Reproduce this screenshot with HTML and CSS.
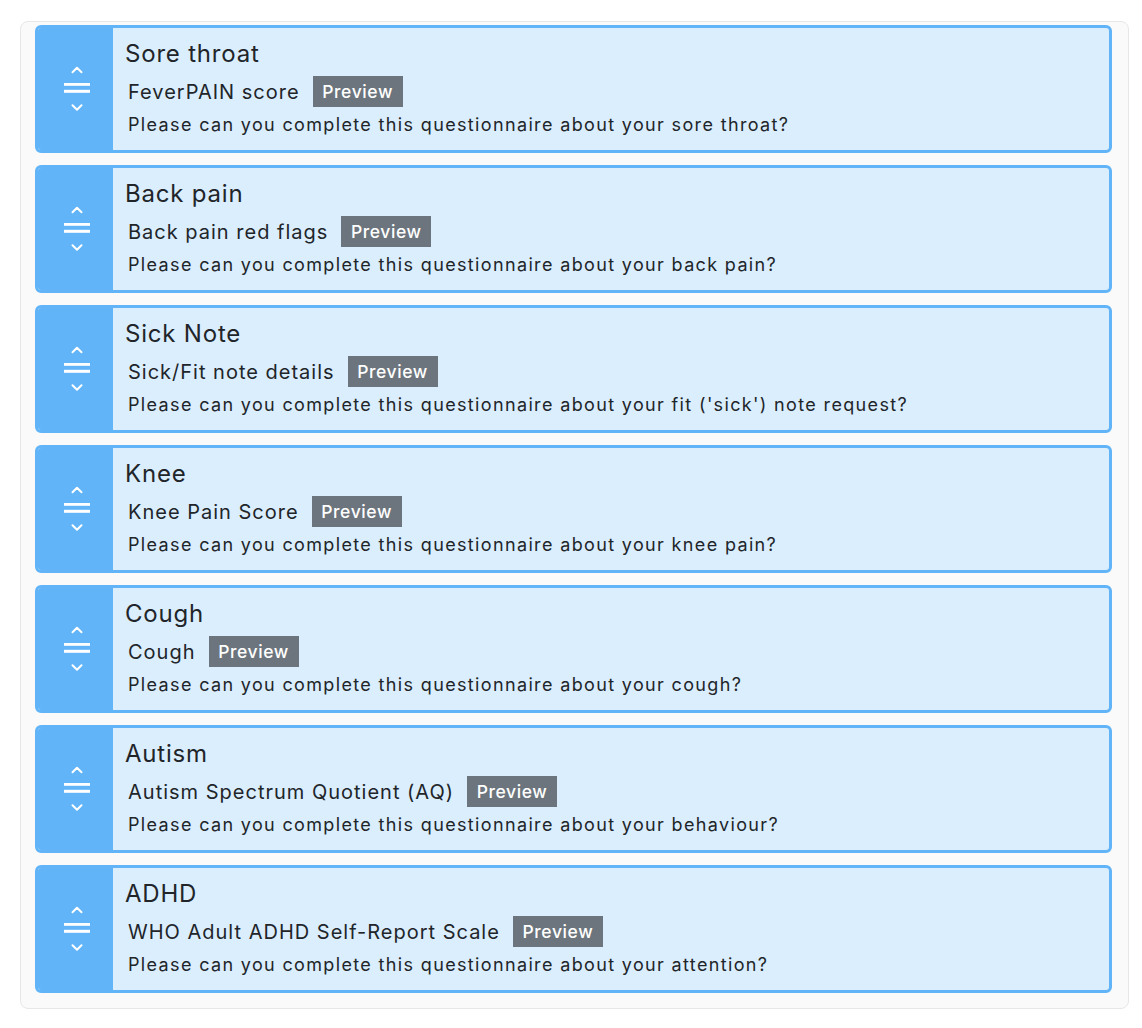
FILE: index.html
```html
<!DOCTYPE html>
<html lang="en">
<head>
<meta charset="utf-8">
<title>Questionnaires</title>
<link rel="stylesheet" href="styles.css">
</head>
<body>
<div class="panel">
  <div class="card">
    <div class="handle">
      <svg class="handle-icon" width="26" height="46" viewBox="0 0 26 46" aria-hidden="true">
        <path d="M8.5 6.2 L13 1.8 L17.5 6.2" fill="none" stroke="#fff" stroke-width="2" stroke-linecap="round" stroke-linejoin="round"/>
        <rect x="0" y="17" width="26" height="2.8" fill="#fff"/>
        <rect x="0" y="23.8" width="26" height="3" fill="#fff"/>
        <path d="M8.5 39.3 L13 43.7 L17.5 39.3" fill="none" stroke="#fff" stroke-width="2" stroke-linecap="round" stroke-linejoin="round"/>
      </svg>
    </div>
    <div class="body">
      <div class="title">Sore throat</div>
      <div class="sub"><span class="name">FeverPAIN score</span><span class="badge">Preview</span></div>
      <div class="desc">Please can you complete this questionnaire about your sore throat?</div>
    </div>
  </div>
  <div class="card">
    <div class="handle">
      <svg class="handle-icon" width="26" height="46" viewBox="0 0 26 46" aria-hidden="true">
        <path d="M8.5 6.2 L13 1.8 L17.5 6.2" fill="none" stroke="#fff" stroke-width="2" stroke-linecap="round" stroke-linejoin="round"/>
        <rect x="0" y="17" width="26" height="2.8" fill="#fff"/>
        <rect x="0" y="23.8" width="26" height="3" fill="#fff"/>
        <path d="M8.5 39.3 L13 43.7 L17.5 39.3" fill="none" stroke="#fff" stroke-width="2" stroke-linecap="round" stroke-linejoin="round"/>
      </svg>
    </div>
    <div class="body">
      <div class="title">Back pain</div>
      <div class="sub"><span class="name">Back pain red flags</span><span class="badge">Preview</span></div>
      <div class="desc">Please can you complete this questionnaire about your back pain?</div>
    </div>
  </div>
  <div class="card">
    <div class="handle">
      <svg class="handle-icon" width="26" height="46" viewBox="0 0 26 46" aria-hidden="true">
        <path d="M8.5 6.2 L13 1.8 L17.5 6.2" fill="none" stroke="#fff" stroke-width="2" stroke-linecap="round" stroke-linejoin="round"/>
        <rect x="0" y="17" width="26" height="2.8" fill="#fff"/>
        <rect x="0" y="23.8" width="26" height="3" fill="#fff"/>
        <path d="M8.5 39.3 L13 43.7 L17.5 39.3" fill="none" stroke="#fff" stroke-width="2" stroke-linecap="round" stroke-linejoin="round"/>
      </svg>
    </div>
    <div class="body">
      <div class="title">Sick Note</div>
      <div class="sub"><span class="name">Sick/Fit note details</span><span class="badge">Preview</span></div>
      <div class="desc">Please can you complete this questionnaire about your fit ('sick') note request?</div>
    </div>
  </div>
  <div class="card">
    <div class="handle">
      <svg class="handle-icon" width="26" height="46" viewBox="0 0 26 46" aria-hidden="true">
        <path d="M8.5 6.2 L13 1.8 L17.5 6.2" fill="none" stroke="#fff" stroke-width="2" stroke-linecap="round" stroke-linejoin="round"/>
        <rect x="0" y="17" width="26" height="2.8" fill="#fff"/>
        <rect x="0" y="23.8" width="26" height="3" fill="#fff"/>
        <path d="M8.5 39.3 L13 43.7 L17.5 39.3" fill="none" stroke="#fff" stroke-width="2" stroke-linecap="round" stroke-linejoin="round"/>
      </svg>
    </div>
    <div class="body">
      <div class="title">Knee</div>
      <div class="sub"><span class="name">Knee Pain Score</span><span class="badge">Preview</span></div>
      <div class="desc">Please can you complete this questionnaire about your knee pain?</div>
    </div>
  </div>
  <div class="card">
    <div class="handle">
      <svg class="handle-icon" width="26" height="46" viewBox="0 0 26 46" aria-hidden="true">
        <path d="M8.5 6.2 L13 1.8 L17.5 6.2" fill="none" stroke="#fff" stroke-width="2" stroke-linecap="round" stroke-linejoin="round"/>
        <rect x="0" y="17" width="26" height="2.8" fill="#fff"/>
        <rect x="0" y="23.8" width="26" height="3" fill="#fff"/>
        <path d="M8.5 39.3 L13 43.7 L17.5 39.3" fill="none" stroke="#fff" stroke-width="2" stroke-linecap="round" stroke-linejoin="round"/>
      </svg>
    </div>
    <div class="body">
      <div class="title">Cough</div>
      <div class="sub"><span class="name">Cough</span><span class="badge">Preview</span></div>
      <div class="desc">Please can you complete this questionnaire about your cough?</div>
    </div>
  </div>
  <div class="card">
    <div class="handle">
      <svg class="handle-icon" width="26" height="46" viewBox="0 0 26 46" aria-hidden="true">
        <path d="M8.5 6.2 L13 1.8 L17.5 6.2" fill="none" stroke="#fff" stroke-width="2" stroke-linecap="round" stroke-linejoin="round"/>
        <rect x="0" y="17" width="26" height="2.8" fill="#fff"/>
        <rect x="0" y="23.8" width="26" height="3" fill="#fff"/>
        <path d="M8.5 39.3 L13 43.7 L17.5 39.3" fill="none" stroke="#fff" stroke-width="2" stroke-linecap="round" stroke-linejoin="round"/>
      </svg>
    </div>
    <div class="body">
      <div class="title">Autism</div>
      <div class="sub"><span class="name">Autism Spectrum Quotient (AQ)</span><span class="badge">Preview</span></div>
      <div class="desc">Please can you complete this questionnaire about your behaviour?</div>
    </div>
  </div>
  <div class="card">
    <div class="handle">
      <svg class="handle-icon" width="26" height="46" viewBox="0 0 26 46" aria-hidden="true">
        <path d="M8.5 6.2 L13 1.8 L17.5 6.2" fill="none" stroke="#fff" stroke-width="2" stroke-linecap="round" stroke-linejoin="round"/>
        <rect x="0" y="17" width="26" height="2.8" fill="#fff"/>
        <rect x="0" y="23.8" width="26" height="3" fill="#fff"/>
        <path d="M8.5 39.3 L13 43.7 L17.5 39.3" fill="none" stroke="#fff" stroke-width="2" stroke-linecap="round" stroke-linejoin="round"/>
      </svg>
    </div>
    <div class="body">
      <div class="title">ADHD</div>
      <div class="sub"><span class="name">WHO Adult ADHD Self-Report Scale</span><span class="badge">Preview</span></div>
      <div class="desc">Please can you complete this questionnaire about your attention?</div>
    </div>
  </div>
</div>
</body>
</html>
```

FILE: styles.css
```css
* { box-sizing: border-box; }

html, body {
  margin: 0;
  padding: 0;
  background: #ffffff;
}

body {
  font-family: "Inter", "Noto Sans", sans-serif;
  color: #212529;
}

.panel {
  margin: 21px 13px 0 20px;
  padding: 3px 16px 15px 14px;
  background: #fafafa;
  border: 1px solid #e7e7e7;
  border-radius: 8px;
  display: flex;
  flex-direction: column;
  gap: 12px;
}

.card {
  display: flex;
  height: 128px;
  border: 3px solid #62b4f8;
  border-radius: 6px;
  background: #dbeefd;
  overflow: hidden;
}

.handle {
  flex: 0 0 75px;
  background: #62b4f8;
  display: flex;
  align-items: center;
  justify-content: center;
  padding-left: 3px;
}

.handle-icon {
  display: block;
}

.body {
  flex: 1;
  padding: 8px 0 0 12px;
  display: flex;
  flex-direction: column;
}

.title {
  font-size: 24px;
  line-height: 36px;
  height: 36px;
  letter-spacing: 0.8px;
}

.sub {
  margin-top: 4px;
  height: 31px;
  display: flex;
  align-items: center;
  padding-left: 3px;
}

.name {
  font-size: 20px;
  letter-spacing: 1px;
}

.badge {
  margin-left: 13px;
  height: 31px;
  width: 90px;
  display: flex;
  align-items: center;
  justify-content: center;
  background: #6c757d;
  color: #ffffff;
  font-size: 17.5px;
  font-weight: 500;
  letter-spacing: 0.6px;
}

.desc {
  margin-top: 5px;
  font-size: 18px;
  line-height: 26px;
  padding-left: 3px;
  letter-spacing: 1.35px;
}
```
